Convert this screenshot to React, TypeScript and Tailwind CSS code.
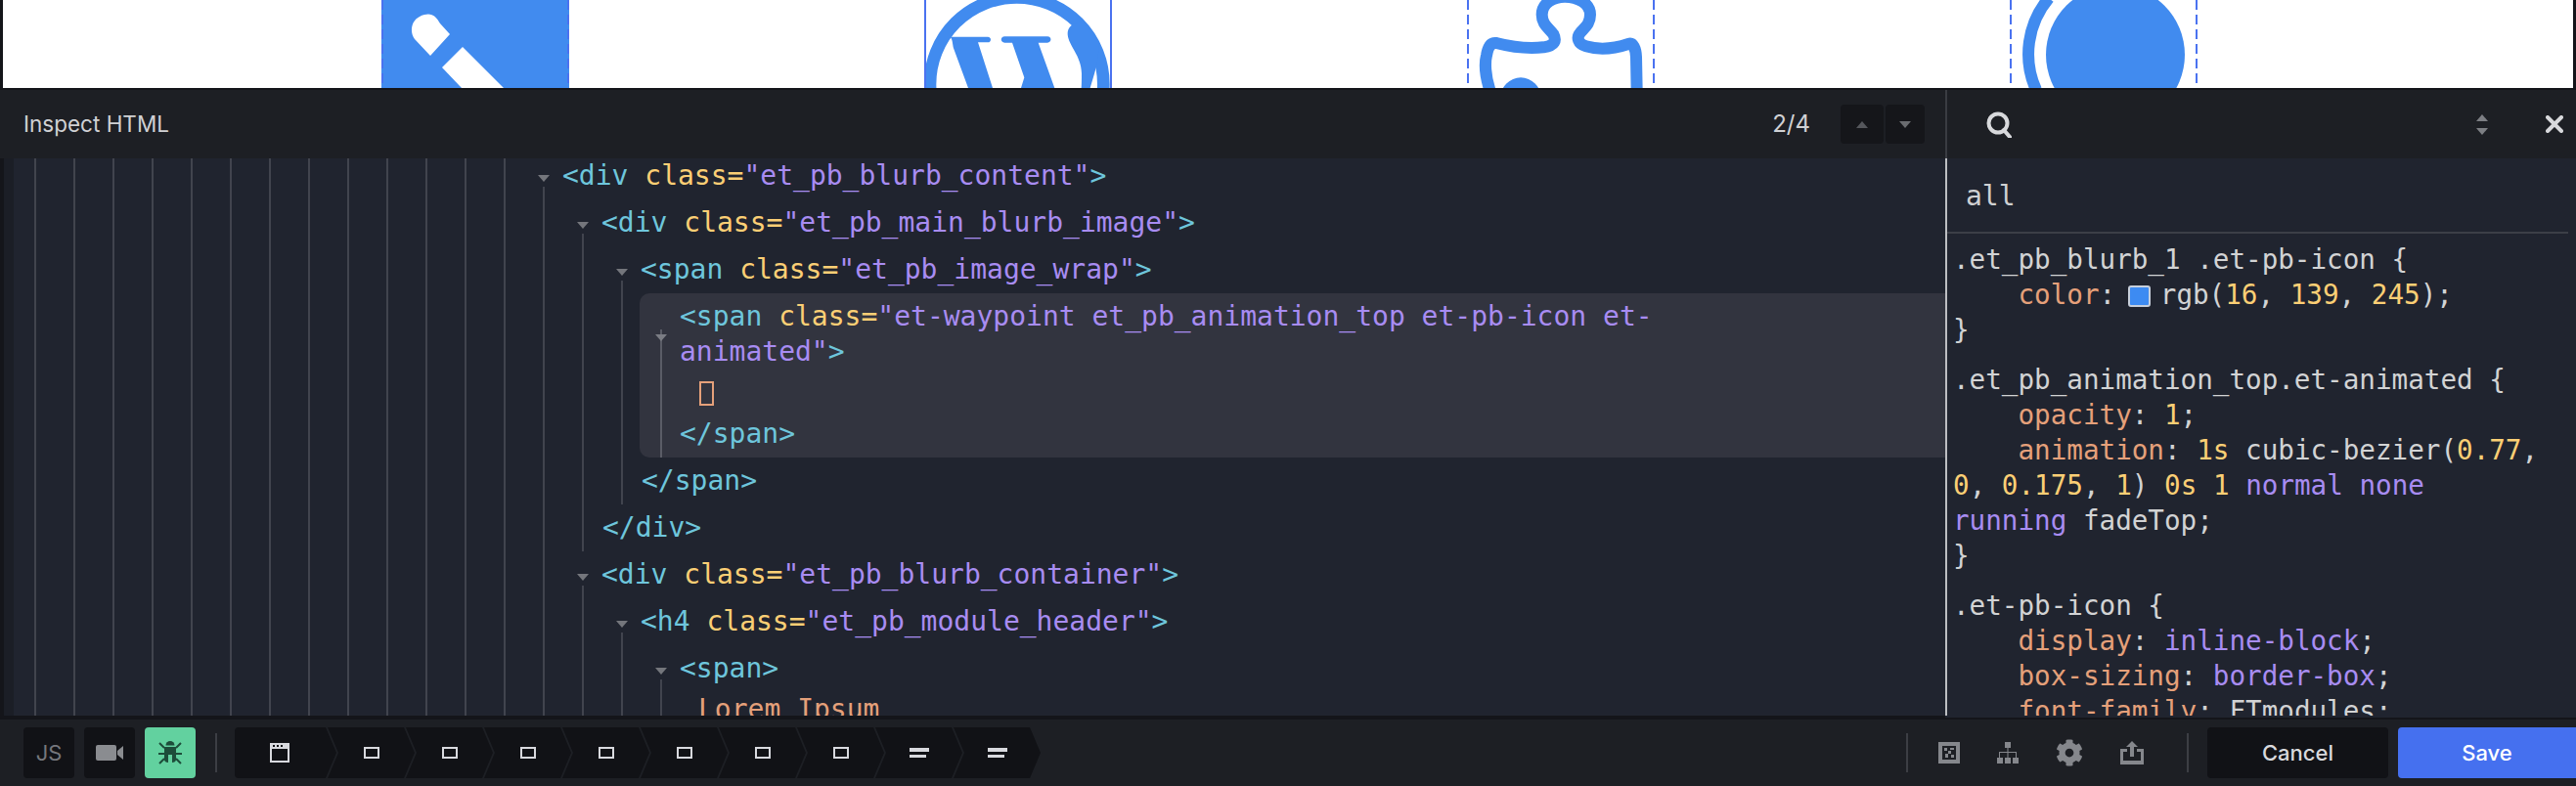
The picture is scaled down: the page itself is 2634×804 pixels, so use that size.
import React from 'react';
import { FaCog } from 'react-icons/fa';

const cyan = 'text-[#6ec6dc]';
const yellow = 'text-[#fbcf75]';
const purple = 'text-[#a88cf2]';
const orange = 'text-[#e5a07a]';
const gray = 'text-[#d2d3d4]';

const Tri = ({ down, className }: { down?: boolean; className: string }) => (
  <svg width="12" height="7" viewBox="0 0 12 7" className={className}>
    <path d={down ? 'M0 0H12L6 7Z' : 'M0 7H12L6 0Z'} fill="currentColor" />
  </svg>
);

const OpenTag = ({ tag, cls, end = true }: { tag: string; cls?: string; end?: boolean }) => (
  <span className="whitespace-pre">
    <span className={cyan}>&lt;{tag}</span>
    {cls !== undefined && (
      <>
        {' '}
        <span className={yellow}>class=</span>
        <span className={purple}>"{cls}{end ? '"' : ''}</span>
      </>
    )}
    {end && <span className={cyan}>&gt;</span>}
  </span>
);

const CloseTag = ({ tag }: { tag: string }) => (
  <div className={`h-[48px] flex items-center whitespace-pre ${cyan}`}>&lt;/{tag}&gt;</div>
);

const Head = ({ children }: { children: React.ReactNode }) => (
  <div className="h-[48px] flex items-center">
    <div className="w-[39px] shrink-0 pl-[14px] pt-[4px]">
      <Tri down className="text-[#74767c]" />
    </div>
    {children}
  </div>
);

const Kids = ({ children }: { children: React.ReactNode }) => (
  <div className="ml-[19px] -mt-[13px] pt-[13px] pl-[19px] border-l-2 border-[#41444e]">{children}</div>
);

const Rule = ({ children }: { children: React.ReactNode }) => <div className="mb-[15px]">{children}</div>;

const Line = ({ children }: { children: React.ReactNode }) => (
  <div className={`h-[36px] leading-[36px] whitespace-pre ${gray}`}>{children}</div>
);

const DashEdge = () => (
  <div className="w-[2px] shrink-0 bg-[repeating-linear-gradient(180deg,#4a72f0_0,#4a72f0_10px,transparent_10px,transparent_15px)]" />
);

const SolidEdge = () => <div className="w-[2px] shrink-0 bg-[#4a72f0]" />;

const PreviewBox = ({ dashed, fill, children }: { dashed?: boolean; fill?: boolean; children: React.ReactNode }) => (
  <div className={`w-[192px] h-[90px] shrink-0 flex ${fill ? 'bg-[#418bef]' : ''}`}>
    {dashed ? <DashEdge /> : <SolidEdge />}
    <div className="flex-1">{children}</div>
    {dashed ? <DashEdge /> : <SolidEdge />}
  </div>
);

const Crumb = ({ children }: { children: React.ReactNode }) => (
  <div className="w-[89px] h-[52px] -ml-[9px] flex items-center justify-center bg-[#111216] [clip-path:polygon(0_0,calc(100%-11px)_0,100%_50%,calc(100%-11px)_100%,0_100%,11px_50%)]">
    {children}
  </div>
);

const BoxIcon = () => <div className="w-[16px] h-[12px] border-2 border-[#d8d9de]" />;

const TextIcon = () => (
  <div className="flex flex-col gap-[3px]">
    <div className="w-[20px] h-[4px] bg-[#d8d9de]" />
    <div className="w-[17px] h-[3px] bg-[#d8d9de]" />
  </div>
);

const Divider = () => <div className="w-[2px] h-[40px] bg-[#3c3e44]" />;

export default function App() {
  return (
    <div className="w-[2634px] h-[804px] flex flex-col overflow-hidden bg-[#14151a] font-['Inter',sans-serif]">
      {/* page preview behind the editor */}
      <div className="h-[90px] mx-[3px] shrink-0 bg-white overflow-hidden flex pl-[387px] gap-[363px]">
        <PreviewBox dashed fill>
          <svg width="188" height="90" viewBox="0 0 188 90">
            <path d="M42 15C50 13 54 17 58 24L68 35L48 57L32 40C27 33 27 19 42 15Z" fill="#fff" />
            <path d="M81 48L123 90H80L60 69Z" fill="#fff" />
          </svg>
        </PreviewBox>
        <PreviewBox>
          <svg width="188" height="90" viewBox="7 0 564 270">
            <circle cx="285" cy="258" r="266" fill="none" stroke="#418bef" strokeWidth="38" />
            <path
              d="M81 113H196C208 113 208 130 196 130H166L211 270H136L91 148C88 135 88 120 81 113Z"
              fill="#418bef"
            />
            <path
              d="M248 112H379C393 112 393 131 379 131H351L401 270H298L308 238L271 131H248C234 131 234 112 248 112Z"
              fill="#418bef"
            />
            <path
              d="M483 68C455 68 440 85 441 105C443 140 483 170 484 225C484 245 484 258 483 270H510C522 230 538 190 536 130C520 100 505 85 483 68Z"
              fill="#418bef"
            />
          </svg>
        </PreviewBox>
        <PreviewBox dashed>
          <svg width="188" height="90" viewBox="36 0 564 270">
            <circle cx="195" cy="300" r="62" fill="#418bef" />
            <path
              d="M100 276C85 230 85 190 90 170C95 140 105 130 120 132C170 145 220 150 265 145C300 140 305 125 295 105C280 85 260 75 260 45C260 10 295 -10 330 -10C370 -10 408 10 408 45C408 75 390 85 378 100C365 115 370 135 395 142C440 155 480 150 525 135C540 130 548 150 549 175L551 276"
              fill="none"
              stroke="#418bef"
              strokeWidth="36"
            />
          </svg>
        </PreviewBox>
        <PreviewBox dashed>
          <svg width="188" height="90" viewBox="0 0 188 90" className="overflow-visible">
            <circle cx="106" cy="56" r="71" fill="#418bef" />
            <path d="M25 92A89 89 0 0 1 38 -2" fill="none" stroke="#418bef" strokeWidth="12" />
          </svg>
        </PreviewBox>
      </div>

      <div className="h-[642px] mt-[2px] shrink-0 flex">
        {/* html pane */}
        <div className="w-[1989px] shrink-0 flex flex-col">
          <div className="h-[70px] shrink-0 bg-[#1d1f24] flex items-center pl-[24px] pr-[21px]">
            <span className="text-[22.5px] text-[#d0d1d4]">Inspect HTML</span>
            <span className="ml-auto mr-[31px] text-[24px] text-[#d0d1d4]">2/4</span>
            <div className="flex gap-[2px]">
              <div className="w-[44px] h-[40px] rounded-[4px] bg-[#15161a] flex items-center justify-center">
                <Tri className="text-[#55575c]" />
              </div>
              <div className="w-[40px] h-[40px] rounded-[4px] bg-[#15161a] flex items-center justify-center">
                <Tri down className="text-[#6a6c70]" />
              </div>
            </div>
          </div>

          <div className="h-[570px] flex bg-[#20242f] overflow-hidden font-['DejaVu_Sans_Mono',monospace] text-[28px]">
            <div className="w-[4px] shrink-0 bg-[#14151a]" />
            <div className="w-[10px] shrink-0 bg-[#1b1e26]" />
            <div className="w-[522px] shrink-0 bg-[repeating-linear-gradient(90deg,transparent_0,transparent_21px,#41444e_21px,#41444e_23px,transparent_23px,transparent_40px)]" />
            <div className="flex-1 -mt-[6px]">
              <Head>
                <OpenTag tag="div" cls="et_pb_blurb_content" />
              </Head>
              <Kids>
                <Head>
                  <OpenTag tag="div" cls="et_pb_main_blurb_image" />
                </Head>
                <Kids>
                  <Head>
                    <OpenTag tag="span" cls="et_pb_image_wrap" />
                  </Head>
                  <Kids>
                    <div className="relative -ml-[2px] h-[168px] pl-[2px] rounded-l-[10px] bg-[#32343f]">
                      <div className="absolute left-[21px] top-[37px] bottom-0 w-[2px] bg-[#5a5c66]" />
                      <div className="flex items-center pt-[6px] h-[78px]">
                        <div className="relative w-[39px] shrink-0 pl-[14px] pt-[6px]">
                          <Tri down className="text-[#7b7d84]" />
                        </div>
                        <div className="leading-[36px]">
                          <div>
                            <OpenTag tag="span" cls="et-waypoint et_pb_animation_top et-pb-icon et-" end={false} />
                          </div>
                          <div className={purple}>
                            animated"<span className={cyan}>&gt;</span>
                          </div>
                        </div>
                      </div>
                      <div className="h-[48px] pl-[59px] flex items-center">
                        <span className="w-[15px] h-[25px] border-2 border-[#e5a07a]" />
                      </div>
                      <div className={`h-[36px] leading-[36px] pl-[39px] ${cyan}`}>&lt;/span&gt;</div>
                    </div>
                    <CloseTag tag="span" />
                  </Kids>
                  <CloseTag tag="div" />
                </Kids>
                <Head>
                  <OpenTag tag="div" cls="et_pb_blurb_container" />
                </Head>
                <Kids>
                  <Head>
                    <OpenTag tag="h4" cls="et_pb_module_header" />
                  </Head>
                  <Kids>
                    <Head>
                      <OpenTag tag="span" />
                    </Head>
                    <Kids>
                      <div className={`h-[36px] leading-[36px] pl-[18px] ${orange}`}>Lorem Ipsum</div>
                    </Kids>
                  </Kids>
                </Kids>
              </Kids>
            </div>
          </div>
        </div>

        {/* css pane */}
        <div className="w-[645px] shrink-0 overflow-hidden flex flex-col bg-[#20242f] font-['DejaVu_Sans_Mono',monospace]">
          <div className="h-[70px] shrink-0 bg-[#1d1f24] border-l-2 border-[#3a3c42] flex items-center pl-[40px] pr-[13px]">
            <svg width="26" height="27" viewBox="0 0 26 27" fill="none" stroke="#d8d9dc" strokeWidth="4">
              <circle cx="12" cy="12" r="9.5" />
              <path d="M18 19L24 26" strokeLinecap="round" />
            </svg>
            <div className="ml-auto mr-[59px] flex flex-col gap-[7px]">
              <Tri className="text-[#7d7f84]" />
              <Tri down className="text-[#7d7f84]" />
            </div>
            <svg width="18" height="18" viewBox="0 0 18 18" stroke="#d8d9dc" strokeWidth="4" strokeLinecap="round">
              <path d="M2 2L16 16M16 2L2 16" />
            </svg>
          </div>
          <div className="h-[570px] border-l-2 border-[#bdbec2] overflow-hidden">
            <div className="h-[77px] mr-[8px] pl-[19px] pt-[21px] border-b-2 border-[#3c3f47] text-[28px] leading-[36px] text-[#cfd0d2]">
              all
            </div>
            <div className="pl-[6px] pt-[9px] text-[27.6px]">
              <Rule>
                <Line>.et_pb_blurb_1 .et-pb-icon {'{'}</Line>
                <Line>
                  {'    '}
                  <span className={orange}>color</span>:{' '}
                  <span className="inline-block w-[23px] h-[22px] -ml-[4px] mr-[10px] align-[-3px] rounded-[3px] border-2 border-[#c7cfdb] bg-[#3d8bf2]" />
                  rgb(<span className={yellow}>16</span>, <span className={yellow}>139</span>,{' '}
                  <span className={yellow}>245</span>);
                </Line>
                <Line>{'}'}</Line>
              </Rule>
              <Rule>
                <Line>.et_pb_animation_top.et-animated {'{'}</Line>
                <Line>
                  {'    '}
                  <span className={orange}>opacity</span>: <span className={yellow}>1</span>;
                </Line>
                <Line>
                  {'    '}
                  <span className={orange}>animation</span>: <span className={yellow}>1s</span> cubic-bezier(
                  <span className={yellow}>0.77</span>,
                </Line>
                <Line>
                  <span className={yellow}>0</span>, <span className={yellow}>0.175</span>,{' '}
                  <span className={yellow}>1</span>) <span className={yellow}>0s</span>{' '}
                  <span className={yellow}>1</span> <span className={purple}>normal none</span>
                </Line>
                <Line>
                  <span className={purple}>running</span> fadeTop;
                </Line>
                <Line>{'}'}</Line>
              </Rule>
              <Rule>
                <Line>.et-pb-icon {'{'}</Line>
                <Line>
                  {'    '}
                  <span className={orange}>display</span>: <span className={purple}>inline-block</span>;
                </Line>
                <Line>
                  {'    '}
                  <span className={orange}>box-sizing</span>: <span className={purple}>border-box</span>;
                </Line>
                <Line>
                  {'    '}
                  <span className={orange}>font-family</span>: FTmodules;
                </Line>
              </Rule>
            </div>
          </div>
        </div>
      </div>

      {/* bottom toolbar */}
      <div className="h-[2px] shrink-0 bg-[#14151a]" />
      <div className="h-[68px] shrink-0 bg-[#1d1f24] flex items-center pl-[24px]">
        <div className="w-[52px] h-[52px] rounded-[4px] bg-[#111216] flex items-center justify-center text-[22px] text-[#75777c]">
          JS
        </div>
        <div className="ml-[10px] w-[52px] h-[52px] rounded-[4px] bg-[#111216] flex items-center justify-center">
          <svg width="28" height="16" viewBox="0 0 28 16" fill="#8a8c90">
            <rect width="21" height="16" rx="2" />
            <path d="M22 6L28 1V15L22 10Z" />
          </svg>
        </div>
        <div className="ml-[10px] w-[52px] h-[52px] rounded-[4px] bg-[#62d19f] flex items-center justify-center">
          <svg width="24" height="24" viewBox="0 0 24 24" fill="#1d4d3a" stroke="#1d4d3a">
            <path d="M7.5 4.5A4.5 4.5 0 0 1 16.5 4.5Z" stroke="none" />
            <path d="M6 6H18V19C18 21 16 22 14 22V14H10V22C8 22 6 21 6 19Z" stroke="none" />
            <path d="M1 2L6 7M23 2L18 7M0 13H24M1 23L6 18M23 23L18 18" strokeWidth="2" fill="none" />
          </svg>
        </div>
        <div className="ml-[20px] mr-[18px]">
          <Divider />
        </div>
        <div className="flex">
          <div className="w-[104px] h-[52px] pr-[12px] rounded-l-[4px] flex items-center justify-center bg-[#111216] [clip-path:polygon(0_0,calc(100%-11px)_0,100%_50%,calc(100%-11px)_100%,0_100%)]">
            <svg width="20" height="20" viewBox="0 0 20 20">
              <rect width="20" height="20" fill="#d8d9de" />
              <rect x="2" y="6" width="16" height="12" fill="#111216" />
              <rect x="3" y="2" width="2" height="2" fill="#111216" />
              <rect x="7" y="2" width="2" height="2" fill="#111216" />
              <rect x="11" y="2" width="2" height="2" fill="#111216" />
            </svg>
          </div>
          <Crumb><BoxIcon /></Crumb>
          <Crumb><BoxIcon /></Crumb>
          <Crumb><BoxIcon /></Crumb>
          <Crumb><BoxIcon /></Crumb>
          <Crumb><BoxIcon /></Crumb>
          <Crumb><BoxIcon /></Crumb>
          <Crumb><BoxIcon /></Crumb>
          <Crumb><TextIcon /></Crumb>
          <Crumb><TextIcon /></Crumb>
        </div>

        <div className="ml-auto">
          <Divider />
        </div>
        <div className="ml-[31px] flex items-center gap-[38px] text-[#85878c]">
          <svg width="22" height="22" viewBox="0 0 22 22">
            <rect width="22" height="22" fill="#85878c" />
            <rect x="4" y="4" width="14" height="14" fill="#1d1f24" />
            <path d="M6 6H9V9H6ZM12 6H16V8H12ZM10 9H13V12H10ZM7 12H10V16H7ZM13 13H16V16H13Z" fill="#85878c" />
          </svg>
          <svg width="22" height="22" viewBox="0 0 22 22" fill="#85878c">
            <rect x="8" y="0" width="6" height="6" />
            <rect x="10.5" y="6" width="1" height="10" />
            <rect x="2" y="10" width="18" height="1" />
            <rect x="2" y="10" width="1" height="6" />
            <rect x="19" y="10" width="1" height="6" />
            <rect x="0" y="16" width="6" height="6" />
            <rect x="8" y="16" width="6" height="6" />
            <rect x="16" y="16" width="6" height="6" />
          </svg>
          <FaCog className="w-[28px] h-[28px]" />
          <svg width="24" height="24" viewBox="0 0 24 24" fill="#85878c">
            <path d="M0 8H7V11H3V20H21V11H17V8H24V24H0Z" />
            <path d="M12 0L18 6H14V16H10V6H6Z" />
          </svg>
        </div>
        <div className="ml-[44px]">
          <Divider />
        </div>
        <div className="ml-[19px] w-[185px] h-[52px] rounded-[4px] bg-[#111216] flex items-center justify-center text-[22px] font-medium text-[#d8d9dc]">
          Cancel
        </div>
        <div className="ml-[10px] w-[182px] h-[52px] rounded-l-[4px] bg-[#4570ef] flex items-center justify-center text-[22px] font-medium text-white">
          Save
        </div>
      </div>
      <div className="h-[2px] shrink-0 bg-[#3a3b40]" />
    </div>
  );
}
